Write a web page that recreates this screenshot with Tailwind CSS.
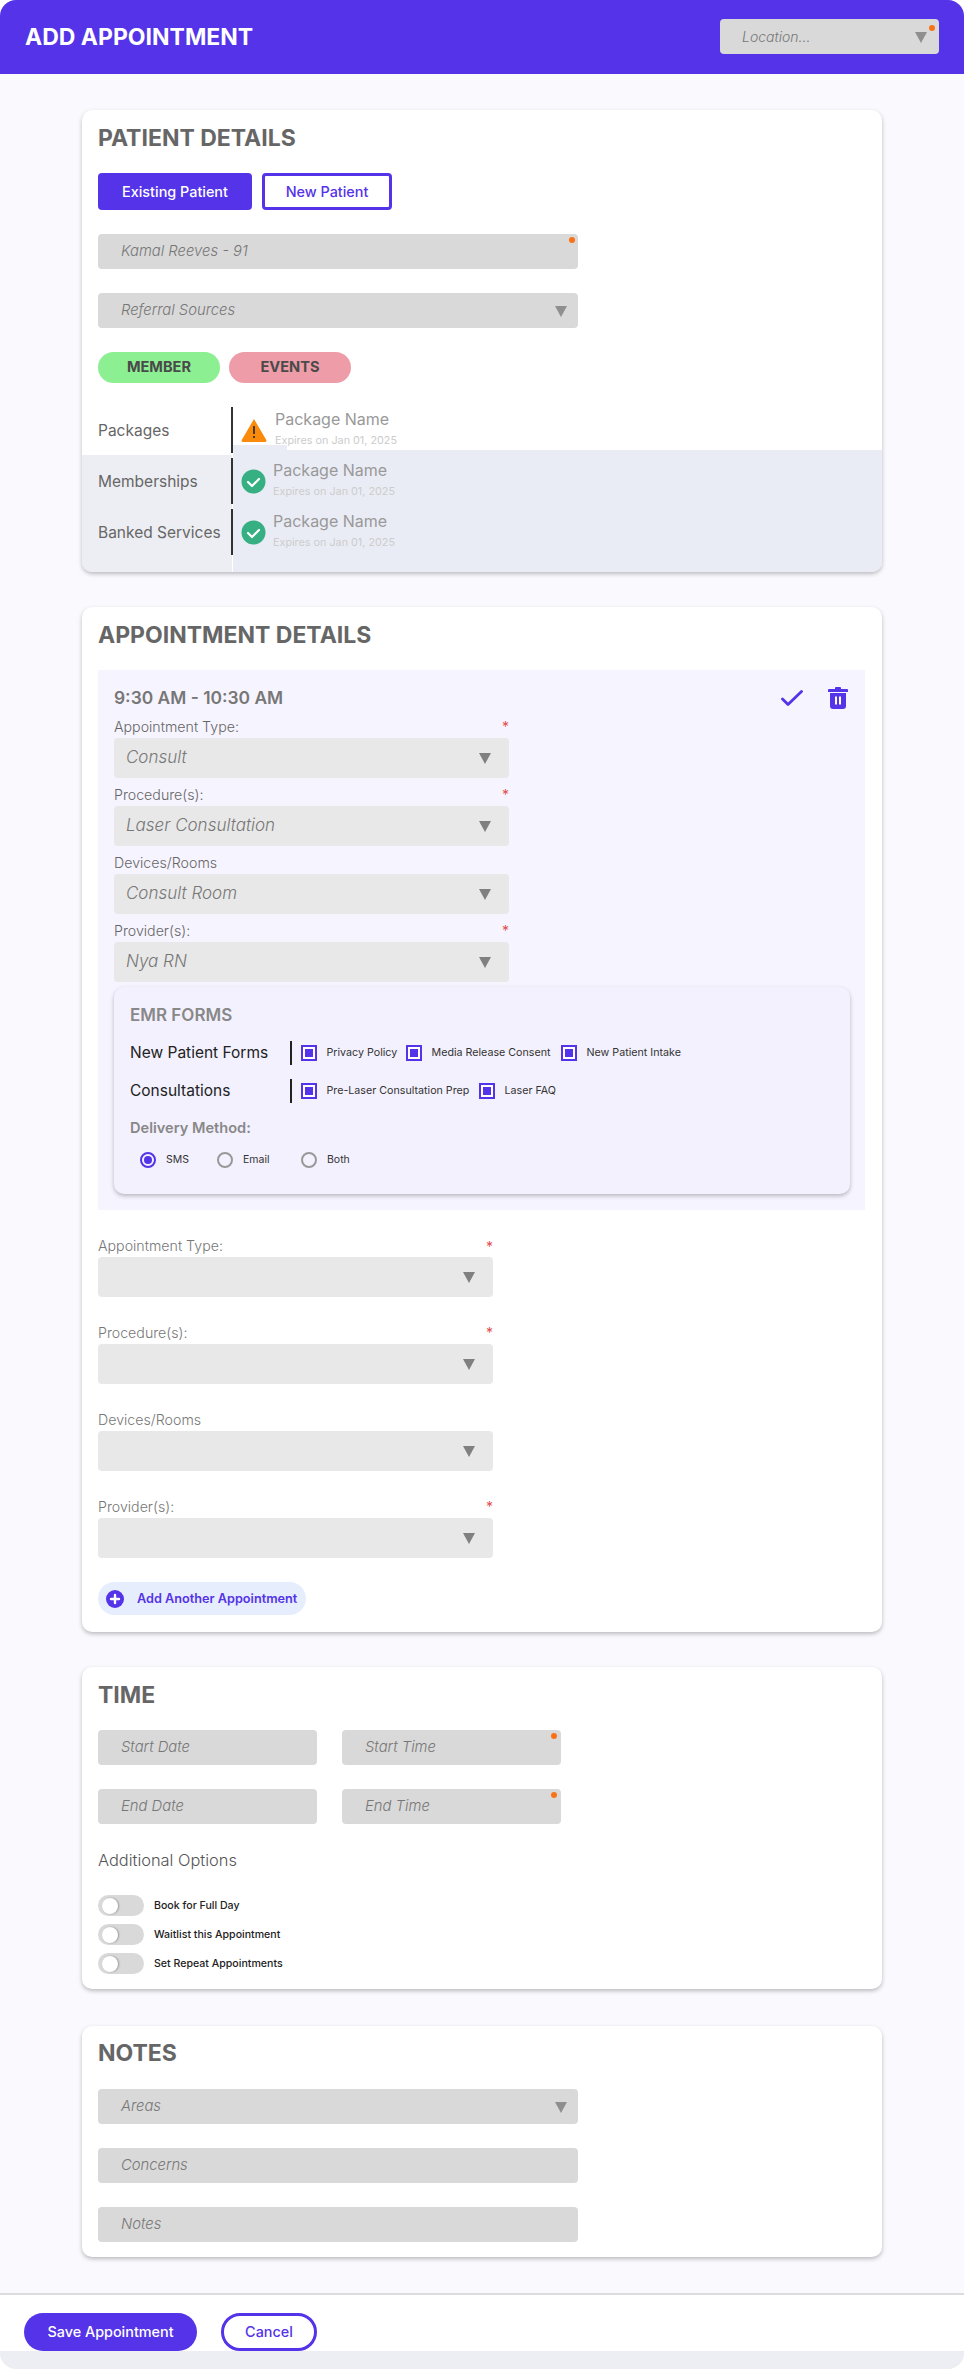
<!DOCTYPE html>
<html lang="en">
<head>
  <meta charset="UTF-8">
  <meta name="viewport" content="width=device-width, initial-scale=1.0">
  <title>Add Appointment</title>
  <script src="https://cdn.jsdelivr.net/npm/@tailwindcss/browser@4"></script>
</head>
<body class="bg-white font-['Inter',sans-serif]">
  <div class="w-[964px] h-[2369px] bg-[#f9f9fe] rounded-[16px] overflow-hidden flex flex-col">

    <!-- header -->
    <header class="h-[74px] shrink-0 bg-[#5433e8] flex items-center justify-between pl-[25px] pr-[25px]">
      <h1 class="text-[23px] font-bold text-white">ADD APPOINTMENT</h1>
      <div class="relative w-[219px] h-[35px] -mt-[1px] bg-[#d9d9d9] rounded-[4px] flex items-center pl-[22px]">
        <span class="text-[14px] font-light italic text-[#777]">Location...</span>
        <span class="absolute right-[12px] top-[13px] w-0 h-0 border-x-[6px] border-x-transparent border-t-[11px] border-t-[#8f8f8f]"></span>
        <span class="absolute right-[4px] top-[6px] w-[6px] h-[6px] rounded-full bg-[#f97316]"></span>
      </div>
    </header>

    <main class="flex-1 px-[82px] pt-[36px]">
      <!-- patient details -->
      <section class="w-[800px] h-[462px] bg-white rounded-[10px] shadow-[0_2px_4px_rgba(0,0,0,0.25)] overflow-hidden">
        <div class="px-[16px]">
          <h2 class="h-[28px] mt-[14px] text-[23px] leading-[28px] font-bold text-[#666]">PATIENT DETAILS</h2>
          <div class="flex gap-[10px] mt-[21px]">
            <button class="w-[154px] h-[37px] rounded-[4px] bg-[#5433e8] text-white text-[14.4px] font-medium">Existing Patient</button>
            <button class="w-[130px] h-[37px] rounded-[4px] border-[3px] border-[#5433e8] text-[#5433e8] text-[14.4px] font-medium">New Patient</button>
          </div>
          <div class="relative w-[480px] h-[35px] mt-[24px] bg-[#d9d9d9] rounded-[4px] flex items-center pl-[23px]">
            <span class="text-[14.8px] font-light italic text-[#777]">Kamal Reeves - 91</span>
            <span class="absolute right-[3px] top-[3px] w-[6px] h-[6px] rounded-full bg-[#f97316]"></span>
          </div>
          <div class="relative w-[480px] h-[35px] mt-[24px] bg-[#d9d9d9] rounded-[4px] flex items-center pl-[23px]">
            <span class="text-[14.8px] font-light italic text-[#777]">Referral Sources</span>
            <span class="absolute right-[11px] top-[13px] w-0 h-0 border-x-[6px] border-x-transparent border-t-[11px] border-t-[#8f8f8f]"></span>
          </div>
          <div class="flex gap-[9px] mt-[24px]">
            <span class="w-[122px] h-[31px] rounded-full bg-[#8cef92] flex items-center justify-center text-[14.6px] font-bold text-[#4a4a4a]">MEMBER</span>
            <span class="w-[122px] h-[31px] rounded-full bg-[#ee9ca7] flex items-center justify-center text-[14.6px] font-bold text-[#4a4a4a]">EVENTS</span>
          </div>
        </div>

        <div class="relative mt-[24px]">
          <!-- the grey band has an uneven top edge in the design -->
          <div class="absolute left-0 w-[150px] top-[48px] h-[117px] bg-[#edeef3]"></div>
          <div class="absolute left-[151px] w-[54px] top-[38px] h-[127px] bg-[#eaecf5]"></div>
          <div class="absolute left-[205px] right-0 top-[43px] h-[122px] bg-[#eaecf5]"></div>
          <div class="relative flex flex-col gap-[5px] pl-[16px]">
            <div class="flex items-center h-[46px]">
              <span class="w-[133px] mt-[2px] text-[15.5px] text-[#666]">Packages</span>
              <span class="w-[2px] h-[46px] bg-[#333]"></span>
              <svg class="ml-[8px] w-[26px] h-[24px]" viewBox="0 0 26 24"><path d="M13 1 25 21.500a1.500 1.500 0 0 1-1.300 2.500H2.300a1.500 1.500 0 0 1-1.300-2.500Z" fill="#f98a0b"/><rect x="12" y="8" width="2" height="8" fill="#4a3a20"/><rect x="12" y="18" width="2" height="2" fill="#4a3a20"/></svg>
              <div class="ml-[8px] flex flex-col">
                <span class="text-[16px] leading-[22px] text-[#999]">Package Name</span>
                <span class="text-[10.8px] leading-[22px] text-[#ccc]">Expires on Jan 01, 2025</span>
              </div>
            </div>
            <div class="flex items-center h-[46px]">
              <span class="w-[133px] mt-[2px] text-[15.5px] text-[#666]">Memberships</span>
              <span class="w-[2px] h-[46px] bg-[#333]"></span>
              <svg class="ml-[8px] w-[25px] h-[25px]" viewBox="0 0 25 25"><circle cx="12.500" cy="12.500" r="12" fill="#36b083"/><path d="M7 13l4 4 7-7" fill="none" stroke="#fff" stroke-width="2.200" stroke-linecap="round" stroke-linejoin="round"/></svg>
              <div class="ml-[7px] flex flex-col">
                <span class="text-[16px] leading-[22px] text-[#999]">Package Name</span>
                <span class="text-[10.8px] leading-[22px] text-[#ccc]">Expires on Jan 01, 2025</span>
              </div>
            </div>
            <div class="flex items-center h-[46px]">
              <span class="w-[133px] mt-[2px] text-[15.5px] text-[#666]">Banked Services</span>
              <span class="w-[2px] h-[46px] bg-[#333]"></span>
              <svg class="ml-[8px] w-[25px] h-[25px]" viewBox="0 0 25 25"><circle cx="12.500" cy="12.500" r="12" fill="#36b083"/><path d="M7 13l4 4 7-7" fill="none" stroke="#fff" stroke-width="2.200" stroke-linecap="round" stroke-linejoin="round"/></svg>
              <div class="ml-[7px] flex flex-col">
                <span class="text-[16px] leading-[22px] text-[#999]">Package Name</span>
                <span class="text-[10.8px] leading-[22px] text-[#ccc]">Expires on Jan 01, 2025</span>
              </div>
            </div>
          </div>
        </div>
      </section>

      <!-- appointment details -->
      <section class="w-[800px] h-[1025px] mt-[35px] bg-white rounded-[10px] shadow-[0_2px_4px_rgba(0,0,0,0.25)] px-[16px]">
        <h2 class="h-[28px] pt-[14px] box-content text-[23px] leading-[28px] font-bold text-[#666]">APPOINTMENT DETAILS</h2>
        <div class="w-[767px] h-[540px] mt-[21px] bg-[#f6f4fe] px-[16px] pt-[16px]">
          <div class="flex items-center justify-between h-[24px]">
            <span class="text-[17.4px] font-semibold text-[#777]">9:30 AM - 10:30 AM</span>
            <div class="flex items-center gap-[25px] pr-[1px]">
              <svg class="w-[22px] h-[16px]" viewBox="0 0 22 16"><path d="M1.500 9 7 14.500 20.500 1.500" fill="none" stroke="#5433e8" stroke-width="2.800" stroke-linecap="round" stroke-linejoin="round"/></svg>
              <svg class="w-[20px] h-[22px]" viewBox="0 0 20 22"><path d="M7 1a1 1 0 0 1 1-1h4a1 1 0 0 1 1 1v1h6a1 1 0 0 1 1 1v2H0V3a1 1 0 0 1 1-1h6ZM2 6h16v13a3 3 0 0 1-3 3H5a3 3 0 0 1-3-3Z" fill="#5433e8"/><rect x="7" y="9.500" width="2" height="8" fill="#fff"/><rect x="11" y="9.500" width="2" height="8" fill="#fff"/></svg>
            </div>
          </div>
          <div class="w-[395px] flex flex-col gap-[5px] mt-[5px]">
            <div>
              <div class="flex justify-between h-[23px] items-center"><span class="text-[14.2px] font-light text-[#666]">Appointment Type:</span><span class="text-[14px] text-[#e04f4f]">*</span></div>
              <div class="relative h-[40px] bg-[#e8e8e8] rounded-[4px] flex items-center pl-[12px]"><span class="text-[17px] font-light italic text-[#777]">Consult</span><span class="absolute right-[18px] top-[15px] w-0 h-0 border-x-[6px] border-x-transparent border-t-[11px] border-t-[#808080]"></span></div>
            </div>
            <div>
              <div class="flex justify-between h-[23px] items-center"><span class="text-[14.2px] font-light text-[#666]">Procedure(s):</span><span class="text-[14px] text-[#e04f4f]">*</span></div>
              <div class="relative h-[40px] bg-[#e8e8e8] rounded-[4px] flex items-center pl-[12px]"><span class="text-[17px] font-light italic text-[#777]">Laser Consultation</span><span class="absolute right-[18px] top-[15px] w-0 h-0 border-x-[6px] border-x-transparent border-t-[11px] border-t-[#808080]"></span></div>
            </div>
            <div>
              <div class="flex justify-between h-[23px] items-center"><span class="text-[14.2px] font-light text-[#666]">Devices/Rooms</span></div>
              <div class="relative h-[40px] bg-[#e8e8e8] rounded-[4px] flex items-center pl-[12px]"><span class="text-[17px] font-light italic text-[#777]">Consult Room</span><span class="absolute right-[18px] top-[15px] w-0 h-0 border-x-[6px] border-x-transparent border-t-[11px] border-t-[#808080]"></span></div>
            </div>
            <div>
              <div class="flex justify-between h-[23px] items-center"><span class="text-[14.2px] font-light text-[#666]">Provider(s):</span><span class="text-[14px] text-[#e04f4f]">*</span></div>
              <div class="relative h-[40px] bg-[#e8e8e8] rounded-[4px] flex items-center pl-[12px]"><span class="text-[17px] font-light italic text-[#777]">Nya RN</span><span class="absolute right-[18px] top-[15px] w-0 h-0 border-x-[6px] border-x-transparent border-t-[11px] border-t-[#808080]"></span></div>
            </div>
          </div>

          <!-- emr forms -->
          <div class="w-[736px] h-[207px] mt-[5px] bg-[#f3f1fe] rounded-[10px] shadow-[0_2px_4px_rgba(0,0,0,0.25)] px-[16px] pt-[17px]">
            <h3 class="text-[17px] leading-[22px] font-semibold text-[#888]">EMR FORMS</h3>
            <div class="flex items-center h-[24px] mt-[15px]">
              <span class="w-[160px] text-[15.5px] text-[#222]">New Patient Forms</span>
              <span class="w-[1.500px] h-[24px] bg-[#222]"></span>
              <span class="ml-[9px] w-[16px] h-[16px] border-[2px] border-[#5433e8] bg-white p-[2px]"><span class="block w-full h-full bg-[#5433e8]"></span></span>
              <span class="ml-[10px] w-[79px] text-[10.7px] text-[#333] whitespace-nowrap">Privacy Policy</span>
              <span class="w-[16px] h-[16px] border-[2px] border-[#5433e8] bg-white p-[2px]"><span class="block w-full h-full bg-[#5433e8]"></span></span>
              <span class="ml-[10px] w-[129px] text-[10.7px] text-[#333] whitespace-nowrap">Media Release Consent</span>
              <span class="w-[16px] h-[16px] border-[2px] border-[#5433e8] bg-white p-[2px]"><span class="block w-full h-full bg-[#5433e8]"></span></span>
              <span class="ml-[10px] text-[10.7px] text-[#333] whitespace-nowrap">New Patient Intake</span>
            </div>
            <div class="flex items-center h-[24px] mt-[14px]">
              <span class="w-[160px] text-[15.5px] text-[#222]">Consultations</span>
              <span class="w-[1.500px] h-[24px] bg-[#222]"></span>
              <span class="ml-[9px] w-[16px] h-[16px] border-[2px] border-[#5433e8] bg-white p-[2px]"><span class="block w-full h-full bg-[#5433e8]"></span></span>
              <span class="ml-[10px] w-[152px] text-[10.7px] text-[#333] whitespace-nowrap">Pre-Laser Consultation Prep</span>
              <span class="w-[16px] h-[16px] border-[2px] border-[#5433e8] bg-white p-[2px]"><span class="block w-full h-full bg-[#5433e8]"></span></span>
              <span class="ml-[10px] text-[10.7px] text-[#333] whitespace-nowrap">Laser FAQ</span>
            </div>
            <div class="mt-[15px] text-[14.6px] leading-[20px] font-semibold text-[#888]">Delivery Method:</div>
            <div class="flex items-center h-[16px] mt-[14px] pl-[10px]">
              <span class="w-[16px] h-[16px] rounded-full border-[2px] border-[#5433e8] p-[2px]"><span class="block w-full h-full rounded-full bg-[#5433e8]"></span></span>
              <span class="ml-[10px] w-[51px] text-[10.5px] text-[#333]">SMS</span>
              <span class="w-[16px] h-[16px] rounded-full border-[2px] border-[#999]"></span>
              <span class="ml-[10px] w-[58px] text-[10.5px] text-[#333]">Email</span>
              <span class="w-[16px] h-[16px] rounded-full border-[2px] border-[#999]"></span>
              <span class="ml-[10px] text-[10.5px] text-[#333]">Both</span>
            </div>
          </div>
        </div>

        <div class="w-[395px] flex flex-col gap-[24px] mt-[25px]">
          <div>
            <div class="flex justify-between h-[22px] items-center"><span class="text-[14.2px] font-light text-[#777]">Appointment Type:</span><span class="text-[14px] text-[#e04f4f]">*</span></div>
            <div class="relative h-[40px] bg-[#e8e8e8] rounded-[4px]"><span class="absolute right-[18px] top-[15px] w-0 h-0 border-x-[6px] border-x-transparent border-t-[11px] border-t-[#808080]"></span></div>
          </div>
          <div>
            <div class="flex justify-between h-[23px] items-center"><span class="text-[14.2px] font-light text-[#777]">Procedure(s):</span><span class="text-[14px] text-[#e04f4f]">*</span></div>
            <div class="relative h-[40px] bg-[#e8e8e8] rounded-[4px]"><span class="absolute right-[18px] top-[15px] w-0 h-0 border-x-[6px] border-x-transparent border-t-[11px] border-t-[#808080]"></span></div>
          </div>
          <div>
            <div class="flex justify-between h-[23px] items-center"><span class="text-[14.2px] font-light text-[#777]">Devices/Rooms</span></div>
            <div class="relative h-[40px] bg-[#e8e8e8] rounded-[4px]"><span class="absolute right-[18px] top-[15px] w-0 h-0 border-x-[6px] border-x-transparent border-t-[11px] border-t-[#808080]"></span></div>
          </div>
          <div>
            <div class="flex justify-between h-[23px] items-center"><span class="text-[14.2px] font-light text-[#777]">Provider(s):</span><span class="text-[14px] text-[#e04f4f]">*</span></div>
            <div class="relative h-[40px] bg-[#e8e8e8] rounded-[4px]"><span class="absolute right-[18px] top-[15px] w-0 h-0 border-x-[6px] border-x-transparent border-t-[11px] border-t-[#808080]"></span></div>
          </div>
        </div>
        <div class="w-[208px] h-[33px] mt-[24px] rounded-full bg-[#e6edfd] flex items-center pl-[8px]">
          <svg class="w-[18px] h-[18px]" viewBox="0 0 18 18"><circle cx="9" cy="9" r="9" fill="#5433e8"/><path d="M9 5v8M5 9h8" stroke="#fff" stroke-width="2.400" stroke-linecap="round"/></svg>
          <span class="ml-[13px] text-[12.7px] font-semibold text-[#5433e8] whitespace-nowrap">Add Another Appointment</span>
        </div>
      </section>

      <!-- time -->
      <section class="w-[800px] h-[322px] mt-[35px] bg-white rounded-[10px] shadow-[0_2px_4px_rgba(0,0,0,0.25)] px-[16px]">
        <h2 class="h-[28px] pt-[14px] box-content text-[23px] leading-[28px] font-bold text-[#666]">TIME</h2>
        <div class="grid grid-cols-[219px_219px] gap-x-[25px] gap-y-[24px] mt-[21px]">
          <div class="h-[35px] bg-[#d9d9d9] rounded-[4px] flex items-center pl-[23px]"><span class="text-[14.8px] font-light italic text-[#777]">Start Date</span></div>
          <div class="relative h-[35px] bg-[#d9d9d9] rounded-[4px] flex items-center pl-[23px]"><span class="text-[14.8px] font-light italic text-[#777]">Start Time</span><span class="absolute right-[4px] top-[3px] w-[6px] h-[6px] rounded-full bg-[#f97316]"></span></div>
          <div class="h-[35px] bg-[#d9d9d9] rounded-[4px] flex items-center pl-[23px]"><span class="text-[14.8px] font-light italic text-[#777]">End Date</span></div>
          <div class="relative h-[35px] bg-[#d9d9d9] rounded-[4px] flex items-center pl-[23px]"><span class="text-[14.8px] font-light italic text-[#777]">End Time</span><span class="absolute right-[4px] top-[3px] w-[6px] h-[6px] rounded-full bg-[#f97316]"></span></div>
        </div>
        <div class="mt-[24px] h-[24px] text-[16.4px] leading-[24px] font-light text-[#555]">Additional Options</div>
        <div class="flex flex-col gap-[8px] mt-[23px]">
          <div class="flex items-center h-[21px]">
            <span class="relative w-[46px] h-[21px] rounded-full bg-[#d9d9d9]"><span class="absolute left-[4px] top-[2.500px] w-[16px] h-[16px] rounded-full bg-white shadow-[1px_0_2px_rgba(0,0,0,0.3)]"></span></span>
            <span class="ml-[10px] text-[10.6px] font-medium text-[#222]">Book for Full Day</span>
          </div>
          <div class="flex items-center h-[21px]">
            <span class="relative w-[46px] h-[21px] rounded-full bg-[#d9d9d9]"><span class="absolute left-[4px] top-[2.500px] w-[16px] h-[16px] rounded-full bg-white shadow-[1px_0_2px_rgba(0,0,0,0.3)]"></span></span>
            <span class="ml-[10px] text-[10.6px] font-medium text-[#222]">Waitlist this Appointment</span>
          </div>
          <div class="flex items-center h-[21px]">
            <span class="relative w-[46px] h-[21px] rounded-full bg-[#d9d9d9]"><span class="absolute left-[4px] top-[2.500px] w-[16px] h-[16px] rounded-full bg-white shadow-[1px_0_2px_rgba(0,0,0,0.3)]"></span></span>
            <span class="ml-[10px] text-[10.6px] font-medium text-[#222]">Set Repeat Appointments</span>
          </div>
        </div>
      </section>

      <!-- notes -->
      <section class="w-[800px] h-[231px] mt-[37px] bg-white rounded-[10px] shadow-[0_2px_4px_rgba(0,0,0,0.25)] px-[16px]">
        <h2 class="h-[28px] pt-[13px] box-content text-[23px] leading-[28px] font-bold text-[#666]">NOTES</h2>
        <div class="flex flex-col gap-[24px] mt-[22px] w-[480px]">
          <div class="relative h-[35px] bg-[#d9d9d9] rounded-[4px] flex items-center pl-[23px]"><span class="text-[14.8px] font-light italic text-[#777]">Areas</span><span class="absolute right-[11px] top-[13px] w-0 h-0 border-x-[6px] border-x-transparent border-t-[11px] border-t-[#8f8f8f]"></span></div>
          <div class="h-[35px] bg-[#d9d9d9] rounded-[4px] flex items-center pl-[23px]"><span class="text-[14.8px] font-light italic text-[#777]">Concerns</span></div>
          <div class="h-[35px] bg-[#d9d9d9] rounded-[4px] flex items-center pl-[23px]"><span class="text-[14.8px] font-light italic text-[#777]">Notes</span></div>
        </div>
      </section>
    </main>

    <!-- footer -->
    <footer class="h-[76px] shrink-0 bg-[#edeef3] relative">
      <div class="h-[58px] bg-white border-t-[2px] border-t-[#dcdce0] flex gap-[24px] pl-[24px] pt-[18px]">
        <button class="w-[173px] h-[38px] rounded-full bg-[#5433e8] text-white text-[14.4px] font-medium">Save Appointment</button>
        <button class="w-[96px] h-[38px] rounded-full border-[3px] border-[#5433e8] bg-white text-[#5433e8] text-[14.4px] font-medium">Cancel</button>
      </div>
    </footer>
  </div>
</body>
</html>
